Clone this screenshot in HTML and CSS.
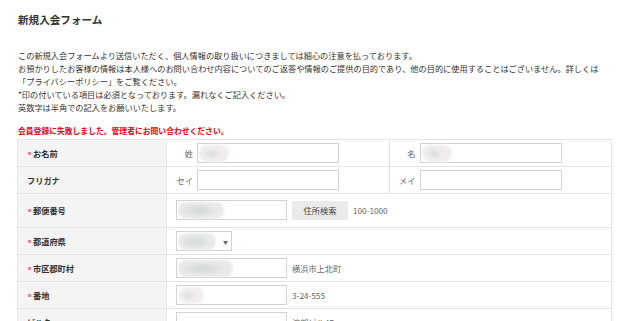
FILE: index.html
```html
<!DOCTYPE html>
<html lang="ja">
<head>
<meta charset="utf-8">
<title>新規入会フォーム</title>
<link rel="stylesheet" href="styles.css">
</head>
<body>
<div class="page">
  <h1 class="title">新規入会フォーム</h1>
  <div class="intro">
    <p>この新規入会フォームより送信いただく、個人情報の取り扱いにつきましては細心の注意を払っております。</p>
    <p>お預かりしたお客様の情報は本人様へのお問い合わせ内容についてのご返答や情報のご提供の目的であり、他の目的に使用することはございません。詳しくは</p>
    <p>「プライバシーポリシー」をご覧ください。</p>
    <p>*印の付いている項目は必須となっております。漏れなくご記入ください。</p>
    <p>英数字は半角での記入をお願いいたします。</p>
  </div>
  <p class="error">会員登録に失敗しました。管理者にお問い合わせください。</p>
  <div class="form">
    <div class="row">
      <div class="label"><span class="req"></span>お名前</div>
      <div class="value split">
        <div class="half"><span class="sub">姓</span><div class="field name"><span class="blob b-name"></span></div></div>
        <div class="half second"><span class="sub">名</span><div class="field name"><span class="blob b-name"></span></div></div>
      </div>
    </div>
    <div class="row">
      <div class="label plain">フリガナ</div>
      <div class="value split">
        <div class="half"><span class="sub">セイ</span><div class="field name"></div></div>
        <div class="half second"><span class="sub">メイ</span><div class="field name"></div></div>
      </div>
    </div>
    <div class="row tall">
      <div class="label"><span class="req"></span>郵便番号</div>
      <div class="value">
        <div class="field mid"><span class="blob b-zip"></span></div>
        <span class="btn">住所検索</span>
        <span class="note">100-1000</span>
      </div>
    </div>
    <div class="row">
      <div class="label"><span class="req"></span>都道府県</div>
      <div class="value">
        <div class="field select"><span class="blob b-pref"></span><span class="arrow">▼</span></div>
      </div>
    </div>
    <div class="row">
      <div class="label"><span class="req"></span>市区郡町村</div>
      <div class="value">
        <div class="field mid"><span class="blob b-city"></span></div>
        <span class="note">横浜市上北町</span>
      </div>
    </div>
    <div class="row">
      <div class="label"><span class="req"></span>番地</div>
      <div class="value">
        <div class="field mid"><span class="blob b-addr"></span></div>
        <span class="note">3-24-555</span>
      </div>
    </div>
    <div class="row">
      <div class="label plain">ビル名</div>
      <div class="value">
        <div class="field mid"></div>
        <span class="note">渡部ビル4F</span>
      </div>
    </div>
  </div>
</div>
</body>
</html>
```
FILE: styles.css
```css
* { box-sizing: border-box; }
html, body { margin: 0; padding: 0; background: #fff; }
body {
  font-family: "Noto Sans CJK JP", "Noto Sans", sans-serif;
  color: #333;
  font-size: 8.2px;
  line-height: 13px;
}
.page { padding: 13px 18px 0 17px; }
.title {
  margin: 0;
  font-size: 10.6px;
  line-height: 13px;
  font-weight: bold;
  color: #333;
  padding-left: 1px;
}
.intro { margin-top: 23px; padding-left: 1px; }
.intro p { margin: 0; white-space: nowrap; }
.error {
  margin: 10px 0 0;
  padding-left: 1px;
  color: #e60012;
  font-weight: bold;
  font-size: 7.8px;
  line-height: 13px;
}
.form {
  margin-top: 2px;
  border: 1px solid #e4e4e4;
  border-bottom: none;
}
.row {
  display: flex;
  border-bottom: 1px solid #e4e4e4;
}
.label {
  width: 149px;
  flex: none;
  background: #f4f4f4;
  border-right: 1px solid #e4e4e4;
  display: flex;
  align-items: center;
  padding-left: 10px;
  font-weight: bold;
  color: #333;
}
.label.plain { padding-left: 9px; }
.req {
  width: 3px;
  height: 3px;
  background: #f47fa0;
  margin-right: 2px;
  flex: none;
}
.value {
  flex: 1;
  display: flex;
  align-items: center;
  padding: 3px 0 3px 9px;
}
.row.tall .value { padding-top: 6px; padding-bottom: 7px; }
.value.split { padding: 0; align-items: stretch; }
.half {
  flex: 1;
  display: flex;
  align-items: center;
  padding: 3px 0;
}
.half.second { border-left: 1px solid #e4e4e4; }
.sub {
  width: 26px;
  text-align: right;
  margin-right: 4px;
  color: #666;
}
.field {
  height: 20px;
  border: 1px solid #d2d2d2;
  background: #fff;
  display: flex;
  align-items: center;
  padding-left: 1px;
}
.field.name { width: 142px; }
.field.mid { width: 111px; }
.field.select { width: 56px; }
.blob {
  display: block;
  height: 17px;
  border-radius: 8px;
  background: radial-gradient(ellipse 42% 45% at 45% 50%, #d3d9d4 0%, #dde2de 50%, #e9ebe9 100%), #f8f2f2;
  background-repeat: no-repeat;
  filter: blur(1px);
}
.b-name { width: 30px; background: radial-gradient(ellipse 28% 32% at 40% 50%, #dcdcdc 0%, #e6e6e6 60%, #f1eded 100%), #f8f2f2; background-repeat: no-repeat; }
.b-zip { width: 46px; }
.b-pref { width: 38px; }
.b-city { width: 55px; }
.b-addr { width: 26px; background: radial-gradient(ellipse 32% 32% at 40% 50%, #dedede 0%, #e8e8e8 60%, #f3efef 100%), #f8f3f3; background-repeat: no-repeat; }
.arrow {
  margin-left: 7px;
  font-size: 5px;
  color: #666;
}
.btn {
  margin-left: 5px;
  width: 56px;
  height: 19px;
  background: #ebebeb;
  display: flex;
  align-items: center;
  justify-content: center;
  color: #444;
}
.note {
  margin-left: 5px;
  color: #666;
}
```
